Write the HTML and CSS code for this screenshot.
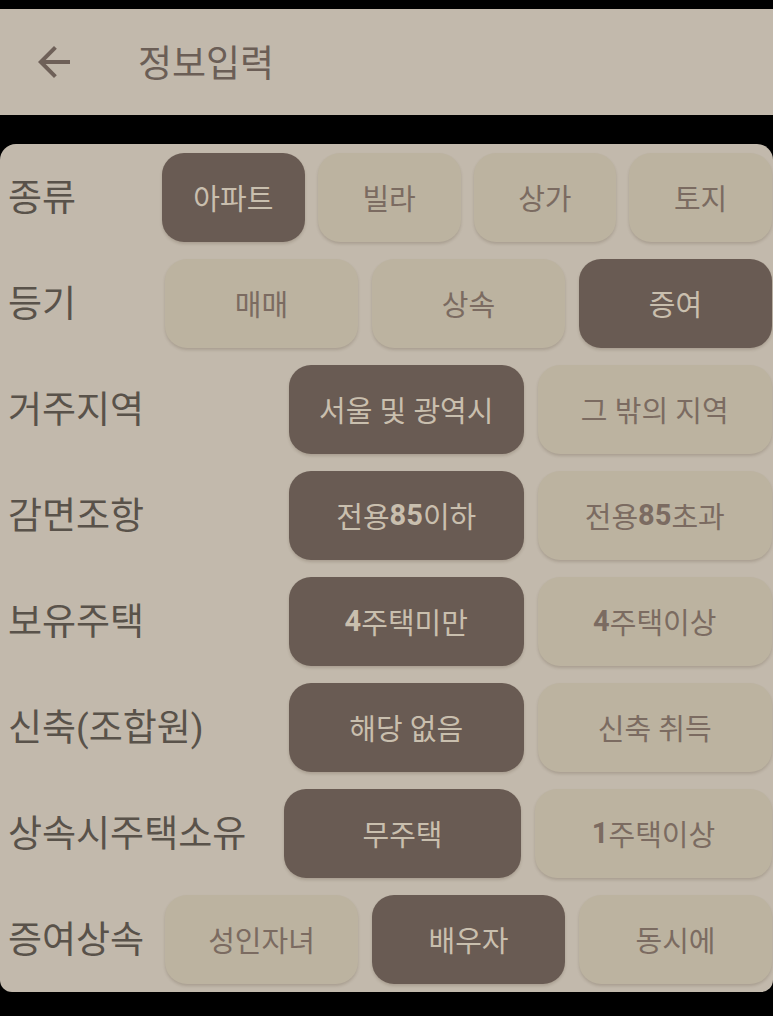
FILE: index.html
```html
<!DOCTYPE html>
<html lang="ko">
<head>
    <meta charset="UTF-8">
    <meta name="viewport" content="width=device-width, initial-scale=1.0">
    <title>정보입력</title>
    <link rel="stylesheet" href="styles.css">
</head>
<body>
    <div id="status"></div>
    <div id="appbar">
        <svg class="back" viewBox="0 0 24 24" width="48" height="48">
            <path d="M20 11H7.83l5.59-5.59L12 4l-8 8 8 8 1.41-1.41L7.83 13H20v-2z"/>
        </svg>
        <span class="title">정보입력</span>
    </div>
    <div id="card">
        <div class="row r4">
            <span class="label">종류</span>
            <div class="btn on">아파트</div>
            <div class="btn">빌라</div>
            <div class="btn">상가</div>
            <div class="btn">토지</div>
        </div>
        <div class="row r3">
            <span class="label">등기</span>
            <div class="btn">매매</div>
            <div class="btn">상속</div>
            <div class="btn on">증여</div>
        </div>
        <div class="row r2">
            <span class="label">거주지역</span>
            <div class="btn on">서울 및 광역시</div>
            <div class="btn">그 밖의 지역</div>
        </div>
        <div class="row r2">
            <span class="label">감면조항</span>
            <div class="btn on">전용<b>85</b>이하</div>
            <div class="btn">전용<b>85</b>초과</div>
        </div>
        <div class="row r2">
            <span class="label">보유주택</span>
            <div class="btn on"><b>4</b>주택미만</div>
            <div class="btn"><b>4</b>주택이상</div>
        </div>
        <div class="row r2">
            <span class="label">신축(조합원)</span>
            <div class="btn on">해당 없음</div>
            <div class="btn">신축 취득</div>
        </div>
        <div class="row r2w">
            <span class="label">상속시주택소유</span>
            <div class="btn on">무주택</div>
            <div class="btn"><b>1</b>주택이상</div>
        </div>
        <div class="row r3">
            <span class="label">증여상속</span>
            <div class="btn">성인자녀</div>
            <div class="btn on">배우자</div>
            <div class="btn">동시에</div>
        </div>
    </div>
</body>
</html>
```

FILE: styles.css
```css
body{
    margin: 0;
    background-color: #000;
    font-family: Roboto, "Noto Sans CJK KR", sans-serif;
}
#status{
    height: 9px;
}
#appbar{
    height: 106px;
    background-color: #c2b9ac;
    display: flex;
    align-items: center;
    margin-bottom: 29px;
}
#appbar .back{
    fill: #6e6058;
    margin-left: 30px;
}
#appbar .title{
    font-size: 37px;
    color: #6b5e56;
    margin-left: 60px;
    padding-bottom: 2px;
}
#card{
    background-color: #c2b9ac;
    border-radius: 16px 16px 12px 12px;
    padding: 0 1px 0 8px;
}
.row{
    height: 106px;
    display: grid;
    align-items: center;
}
.r4{
    grid-template-columns: 141px repeat(4, 1fr);
    column-gap: 13px;
}
.r3{
    grid-template-columns: 143px repeat(3, 1fr);
    column-gap: 14px;
}
.r2{
    grid-template-columns: 267px repeat(2, 1fr);
    column-gap: 14px;
}
.r2w{
    grid-template-columns: 262px repeat(2, 1fr);
    column-gap: 14px;
}
.label{
    font-size: 37px;
    color: #59524a;
    white-space: nowrap;
    padding-bottom: 4px;
}
.btn{
    height: 89px;
    border-radius: 22px;
    background-color: #bcb3a0;
    color: #7b6b61;
    font-size: 29px;
    display: flex;
    align-items: center;
    justify-content: center;
    box-shadow: 0 2px 3px rgba(60, 45, 30, 0.18);
}
.btn.on{
    background-color: #695b53;
    color: #c9bfae;
}
.btn b{
    font-weight: 700;
}
```
